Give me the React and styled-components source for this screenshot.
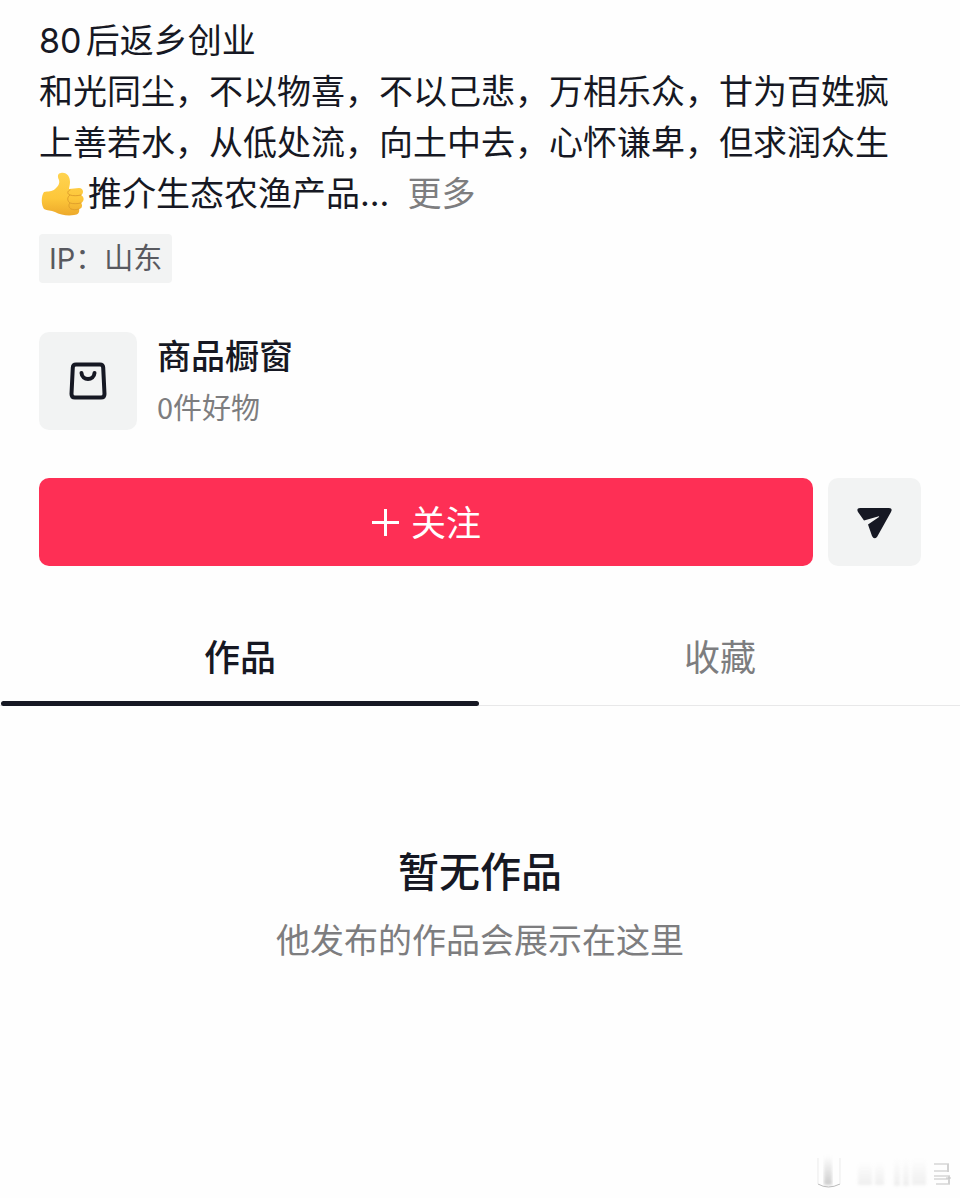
import * as React from "react"
import styled, { createGlobalStyle } from "styled-components"

const GlobalStyle = createGlobalStyle`
  * {
    box-sizing: border-box;
  }

  :root {
    --main-background-color: #fefefe;
    --main-text-color: #161823;
    --muted-text-color: #7d7d7f;
    --panel-color: #f2f3f3;
    --accent-color: #fe2f55;
    --separator-color: #e8e8e9;
  }

  body {
    margin: 0;
    background-color: var(--main-background-color);
    color: var(--main-text-color);
    font-family: "Noto Sans CJK SC", sans-serif;
  }

  button {
    border: 0;
    padding: 0;
    margin: 0;
    background: none;
    color: inherit;
    font-family: inherit;
    cursor: pointer;
  }
`

const Page = styled.main`
  position: relative;
  display: flex;
  flex-direction: column;
  min-height: 100vh;
  padding-top: 15px;
  overflow: hidden;
`

const Profile = styled.section`
  display: flex;
  flex-direction: column;
  align-items: flex-start;
  padding: 0 39px;
`

const Bio = styled.p`
  margin: 0;
  font-family: Inter, "Noto Sans CJK SC", sans-serif;
  font-size: 34px;
  line-height: 51px;
  text-autospace: normal;
`

const MoreButton = styled.button`
  margin-left: 18px;
  color: var(--muted-text-color);
  font-size: 34px;
  line-height: 51px;
`

const Thumb = styled.svg`
  width: 49px;
  height: 44px;
  vertical-align: -10px;
`

const Location = styled.div`
  margin-top: 15px;
  padding: 0 10px;
  border-radius: 4px;
  background-color: var(--panel-color);
  color: #58595f;
  font-family: Inter, "Noto Sans CJK SC", sans-serif;
  font-size: 29px;
  line-height: 49px;
`

const Shop = styled.a`
  display: flex;
  align-items: center;
  gap: 20px;
  margin-top: 49px;
  color: inherit;
  text-decoration: none;
`

const ShopIcon = styled.span`
  display: flex;
  align-items: center;
  justify-content: center;
  width: 98px;
  height: 98px;
  border-radius: 10px;
  background-color: var(--panel-color);
`

const ShopText = styled.span`
  display: flex;
  flex-direction: column;
  gap: 4px;
`

const ShopName = styled.span`
  font-size: 34px;
  font-weight: 500;
  line-height: 46px;
`

const ShopCount = styled.span`
  color: var(--muted-text-color);
  font-size: 29px;
  line-height: 48px;
`

const Actions = styled.div`
  display: flex;
  gap: 15px;
  width: 100%;
  height: 88px;
  margin-top: 48px;
`

const FollowButton = styled.button`
  display: flex;
  flex: 1;
  align-items: center;
  justify-content: center;
  gap: 11px;
  border-radius: 10px;
  background-color: var(--accent-color);
  color: #fff;
  font-size: 35px;
`

const FollowLabel = styled.span`
  padding-bottom: 4px;
`

const MessageButton = styled.button`
  display: flex;
  align-items: center;
  justify-content: center;
  width: 93px;
  border-radius: 10px;
  background-color: var(--panel-color);
`

const Tabs = styled.div`
  display: flex;
  margin-top: 42px;
  border-bottom: 1px solid var(--separator-color);
`

const Tab = styled.button`
  position: relative;
  flex: 1;
  height: 97px;
  padding-bottom: 4px;
  font-size: 36px;
  font-weight: ${({ $active }) => ($active ? 500 : 400)};
  color: ${({ $active }) =>
    $active ? "var(--main-text-color)" : "var(--muted-text-color)"};

  // The marker covers the separator below the tabs
  &::after {
    content: "";
    display: ${({ $active }) => ($active ? "block" : "none")};
    position: absolute;
    left: 1px;
    right: 1px;
    bottom: -1px;
    height: 5px;
    border-radius: 3px;
    background-color: var(--main-text-color);
  }
`

const Empty = styled.section`
  display: flex;
  flex-direction: column;
  align-items: center;
  padding: 133px 39px;
  text-align: center;
`

const EmptyTitle = styled.h2`
  margin: 0;
  font-size: 41px;
  font-weight: 500;
  line-height: 60px;
`

const EmptyHint = styled.p`
  margin: 14px 0 0;
  color: var(--muted-text-color);
  font-size: 34px;
  line-height: 51px;
`

const Mark = styled.svg`
  position: absolute;
  right: 0;
  bottom: 0;
  width: 150px;
  height: 50px;
`

const ThumbIcon = () => (
  <Thumb viewBox="0 0 49 44" role="img" aria-label="赞">
    <defs>
      <linearGradient id="skin" x1="0" y1="0" x2="0" y2="1">
        <stop offset="0" stopColor="#ffd350" />
        <stop offset="0.6" stopColor="#fdc73a" />
        <stop offset="1" stopColor="#eda92b" />
      </linearGradient>
    </defs>
    <path
      fill="url(#skin)"
      d="M5 20C9 19 13 20 16 17C19 14 21 12 20 8C18 4 19 1 22 1C28 0 31 5 31 10C31 13 30 15 30 17L40 16C45 16 45 22 42 23C46 25 45 30 42 31C44 33 43 37 40 37C41 40 39 43 35 43C29 44 21 43 16 40C12 38 8 39 5 37C2 33 2 24 5 20Z"
    />
    <path
      fill="none"
      stroke="#e0a02c"
      strokeWidth="1"
      strokeLinecap="round"
      d="M42 23C38 24 34 24 31 23M42 31C38 32 34 32 31 31M40 37C37 38 34 38 32 37M31 18C28 19 28 22 31 23C28 25 28 29 31 31C29 33 30 36 32 37"
    />
  </Thumb>
)

const BagIcon = () => (
  <svg width="38" height="38" viewBox="0 0 38 38" fill="none" aria-hidden="true">
    <path
      d="M7 2.5H31Q34 2.5 34.2 5.5L35.5 32Q35.5 35.5 32 35.5H6Q2.5 35.5 2.5 32L3.8 5.5Q4 2.5 7 2.5Z"
      stroke="currentColor"
      strokeWidth="4"
      strokeLinejoin="round"
    />
    <path
      d="M12.5 11C13 19 25 19 25.5 11"
      stroke="currentColor"
      strokeWidth="4"
      strokeLinecap="round"
    />
  </svg>
)

const PlusIcon = () => (
  <svg width="29" height="29" viewBox="0 0 29 29" aria-hidden="true">
    <path d="M14.5 1V28M1 14.5H28" stroke="currentColor" strokeWidth="3" />
  </svg>
)

const PlaneIcon = () => (
  <svg width="36" height="34" viewBox="0 0 36 34" aria-hidden="true">
    <path
      fill="currentColor"
      d="M3 3H32Q36 3 34 7L20 32Q17 35 15 31L11 19.5L22 12Q22.5 11 21 11.5L7 15.5L1 7Q-1 3 3 3Z"
    />
  </svg>
)

const FadedMark = () => (
  <Mark viewBox="0 0 150 50" aria-hidden="true">
    <defs>
      <linearGradient id="fade" x1="0" y1="0" x2="0" y2="1">
        <stop offset="0" stopColor="#999" stopOpacity="0" />
        <stop offset="1" stopColor="#999" stopOpacity="0.5" />
      </linearGradient>
      <filter id="soft">
        <feGaussianBlur stdDeviation="1.6" />
      </filter>
    </defs>
    <path d="M14 8H22V37H14Z" fill="url(#fade)" filter="url(#soft)" />
    <path d="M8 36Q18 42 30 36" fill="none" stroke="#bbb" strokeWidth="1" />
    <path d="M8 10V36M30 10V36" stroke="#ebebeb" strokeWidth="1" />
    <g fill="url(#fade)" opacity="0.3" filter="url(#soft)">
      <path d="M48 14H62V37H48ZM65 14H74V37H65Z" />
      <path d="M84 10H90V38H84ZM93 10H99V38H93ZM102 10H116V37H102Z" />
    </g>
    <path
      d="M124 16H138V23H124M124 28H139V36H126M124 31H140"
      fill="none"
      stroke="#e0e0e0"
      strokeWidth="2"
    />
    <path d="M138 16V24M139 28V36M136 30H141" stroke="#c4c4c4" strokeWidth="1" />
  </Mark>
)

const App = () => {
  const [tab, setTab] = React.useState("works")

  return (
    <Page>
      <GlobalStyle />
      <Profile>
        <Bio>
          80后返乡创业
          <br />
          和光同尘，不以物喜，不以己悲，万相乐众，甘为百姓疯
          <br />
          上善若水，从低处流，向土中去，心怀谦卑，但求润众生
          <br />
          <ThumbIcon />
          推介生态农渔产品...
          <MoreButton type="button">更多</MoreButton>
        </Bio>
        <Location>IP：山东</Location>

        <Shop href="#shop">
          <ShopIcon>
            <BagIcon />
          </ShopIcon>
          <ShopText>
            <ShopName>商品橱窗</ShopName>
            <ShopCount>0件好物</ShopCount>
          </ShopText>
        </Shop>

        <Actions>
          <FollowButton type="button">
            <PlusIcon />
            <FollowLabel>关注</FollowLabel>
          </FollowButton>
          <MessageButton type="button" aria-label="私信">
            <PlaneIcon />
          </MessageButton>
        </Actions>
      </Profile>

      <Tabs role="tablist">
        <Tab
          type="button"
          role="tab"
          aria-selected={tab === "works"}
          $active={tab === "works"}
          onClick={() => setTab("works")}
        >
          作品
        </Tab>
        <Tab
          type="button"
          role="tab"
          aria-selected={tab === "favorites"}
          $active={tab === "favorites"}
          onClick={() => setTab("favorites")}
        >
          收藏
        </Tab>
      </Tabs>

      <Empty>
        <EmptyTitle>暂无作品</EmptyTitle>
        <EmptyHint>他发布的作品会展示在这里</EmptyHint>
      </Empty>
      <FadedMark />
    </Page>
  )
}

export default App
